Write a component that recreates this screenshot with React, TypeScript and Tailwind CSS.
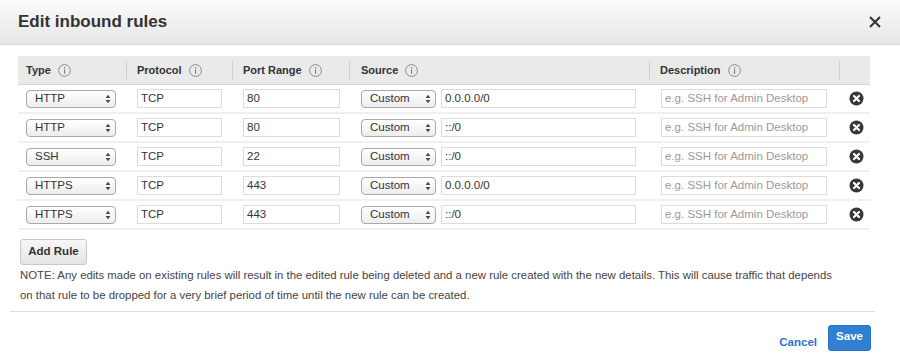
const rules = [
  { type: 'HTTP', port: '80', source: '0.0.0.0/0' },
  { type: 'HTTP', port: '80', source: '::/0' },
  { type: 'SSH', port: '22', source: '::/0' },
  { type: 'HTTPS', port: '443', source: '0.0.0.0/0' },
  { type: 'HTTPS', port: '443', source: '::/0' },
];

function InfoIcon() {
  return (
    <svg width="13" height="13" viewBox="0 0 13 13" className="ml-[7px] shrink-0">
      <circle cx="6.5" cy="6.5" r="5.9" fill="none" stroke="#8c8c8c" strokeWidth="1" />
      <rect x="6" y="5.4" width="1.1" height="4.4" fill="#7c7c7c" />
      <circle cx="6.55" cy="3.7" r="0.75" fill="#7c7c7c" />
    </svg>
  );
}

function SelectArrows() {
  return (
    <svg width="6" height="10" viewBox="0 0 6 10">
      <path d="M0.6 4 L3 0.8 L5.4 4 Z" fill="#4a4a4a" />
      <path d="M0.6 6 L3 9.2 L5.4 6 Z" fill="#4a4a4a" />
    </svg>
  );
}

function FakeSelect({ value, className }: { value: string; className: string }) {
  return (
    <div
      className={`flex h-[18px] items-center justify-between rounded-[4px] border border-[#a8a8a8] bg-gradient-to-b from-white to-[#ededed] pl-[8px] pr-[4px] text-[11.5px] text-[#333] ${className}`}
    >
      <span>{value}</span>
      <SelectArrows />
    </div>
  );
}

function TextBox({ value, placeholder, className }: { value?: string; placeholder?: string; className: string }) {
  return (
    <div className={`flex h-[19px] items-center border border-[#dcdcdc] bg-white px-[3px] text-[11.5px] ${className}`}>
      {value ? <span className="text-[#333]">{value}</span> : <span className="text-[#9a9a9a]">{placeholder}</span>}
    </div>
  );
}

function RemoveIcon() {
  return (
    <svg width="15" height="15" viewBox="0 0 15 15">
      <circle cx="7.5" cy="7.5" r="7" fill="#383838" />
      <path d="M5 5 L10 10 M10 5 L5 10" stroke="#fff" strokeWidth="2.2" strokeLinecap="round" />
    </svg>
  );
}

function HeaderCell({ label, pad }: { label: string; pad: string }) {
  return (
    <div className={`flex items-center ${pad}`}>
      <div className="flex h-[18px] flex-1 items-center border-r border-[#cfcfcf]">
        <span className="text-[11px] font-bold text-[#333]">{label}</span>
        <InfoIcon />
      </div>
    </div>
  );
}

export default function App() {
  return (
    <div className="h-[361px] w-[900px] overflow-hidden bg-white font-['Liberation_Sans',Arial,sans-serif] text-[#333]">
      <div className="flex h-[45px] items-center justify-between border-b border-[#d8d8d8] bg-gradient-to-b from-[#fbfbfb] to-[#e6e6e6] pl-[18px] pr-[19px]">
        <h1 className="text-[17px] font-bold text-[#333]">Edit inbound rules</h1>
        <svg width="12" height="12" viewBox="0 0 12 12">
          <path d="M1 1 L11 11 M11 1 L1 11" stroke="#333" strokeWidth="2" />
        </svg>
      </div>

      <div className="ml-[18px] mt-[11px] w-[852px]">
        <div className="grid h-[29px] grid-cols-[109px_106px_117px_300px_190px_30px] border-b border-[#d6d6d6] bg-[#eaeaea]">
          <HeaderCell label="Type" pad="pl-[8px]" />
          <HeaderCell label="Protocol" pad="pl-[10px]" />
          <HeaderCell label="Port Range" pad="pl-[10px]" />
          <HeaderCell label="Source" pad="pl-[11px]" />
          <HeaderCell label="Description" pad="pl-[10px]" />
          <div />
        </div>

        {rules.map((r, i) => (
          <div
            key={i}
            className="grid h-[29px] grid-cols-[109px_106px_117px_300px_190px_30px] items-center border-b-2 border-[#f0f0f0]"
          >
            <div className="pl-[8px]">
              <FakeSelect value={r.type} className="w-[90px]" />
            </div>
            <div className="pl-[10px]">
              <TextBox value="TCP" className="w-[85px]" />
            </div>
            <div className="pl-[10px]">
              <TextBox value={r.port} className="w-[97px]" />
            </div>
            <div className="flex items-center gap-[5px] pl-[11px]">
              <FakeSelect value="Custom" className="w-[75px]" />
              <TextBox value={r.source} className="w-[195px]" />
            </div>
            <div className="pl-[11px]">
              <TextBox placeholder="e.g. SSH for Admin Desktop" className="w-[166px]" />
            </div>
            <div className="flex justify-center pl-[2px]">
              <RemoveIcon />
            </div>
          </div>
        ))}
      </div>

      <div className="pl-[20px] pt-[8px]">
        <button className="h-[26px] w-[67px] rounded-[3px] border border-[#c8c8c8] bg-gradient-to-b from-[#f7f7f7] to-[#e4e4e4] text-[11.5px] font-bold text-[#333]">
          Add Rule
        </button>
        <p className="text-[11.4px] leading-[20px] text-[#444]">
          NOTE: Any edits made on existing rules will result in the edited rule being deleted and a new rule created with the new details. This will cause traffic that depends
          <br />
          on that rule to be dropped for a very brief period of time until the new rule can be created.
        </p>
      </div>

      <div className="mx-[10px] mt-[6px] w-[865px] border-t border-[#dedede]" />

      <div className="flex items-start justify-end gap-[11px] pr-[29px] pt-[13px]">
        <span className="mt-[9px] text-[11.5px] font-bold text-[#2a75c9]">Cancel</span>
        <button className="h-[26px] w-[43px] rounded-[3px] border border-[#2a72c2] bg-[#2f7fd2] pb-[3px] text-[11.5px] font-bold text-white">
          Save
        </button>
      </div>
    </div>
  );
}
